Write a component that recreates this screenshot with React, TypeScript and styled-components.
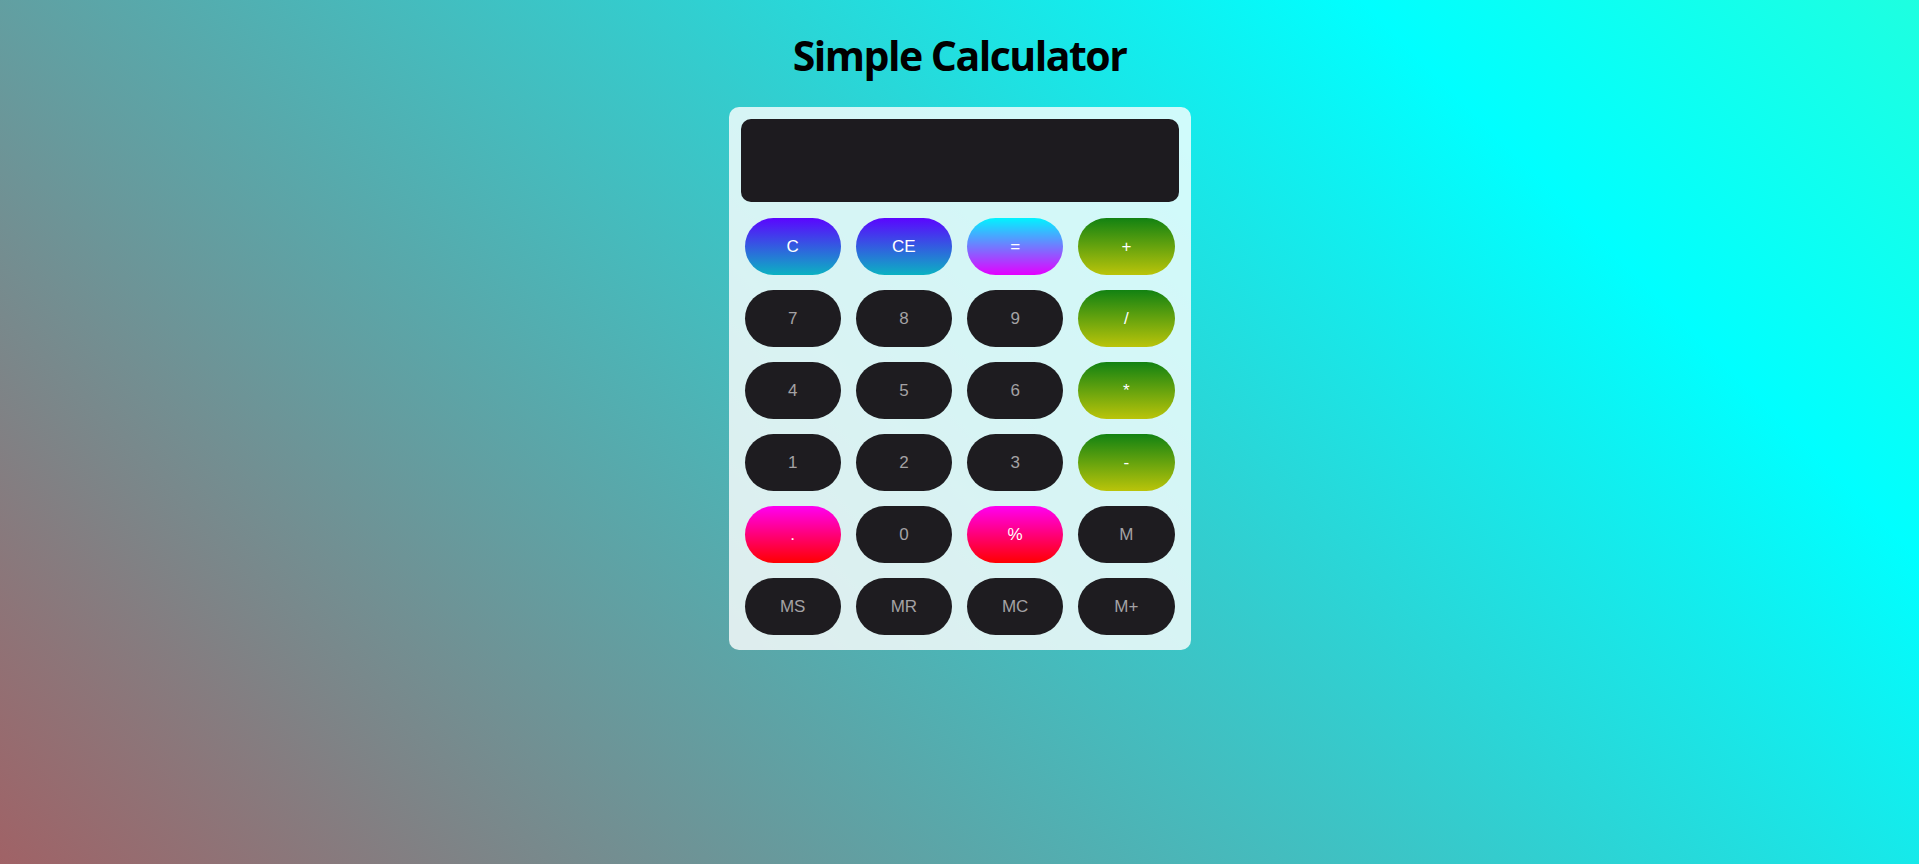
import styled, { createGlobalStyle } from 'styled-components'

type Variant = 'digit' | 'clear' | 'equals' | 'operator' | 'accent'

interface Key {
  label: string
  variant: Variant
}

const keys: Key[] = [
  { label: 'C', variant: 'clear' },
  { label: 'CE', variant: 'clear' },
  { label: '=', variant: 'equals' },
  { label: '+', variant: 'operator' },
  { label: '7', variant: 'digit' },
  { label: '8', variant: 'digit' },
  { label: '9', variant: 'digit' },
  { label: '/', variant: 'operator' },
  { label: '4', variant: 'digit' },
  { label: '5', variant: 'digit' },
  { label: '6', variant: 'digit' },
  { label: '*', variant: 'operator' },
  { label: '1', variant: 'digit' },
  { label: '2', variant: 'digit' },
  { label: '3', variant: 'digit' },
  { label: '-', variant: 'operator' },
  { label: '.', variant: 'accent' },
  { label: '0', variant: 'digit' },
  { label: '%', variant: 'accent' },
  { label: 'M', variant: 'digit' },
  { label: 'MS', variant: 'digit' },
  { label: 'MR', variant: 'digit' },
  { label: 'MC', variant: 'digit' },
  { label: 'M+', variant: 'digit' },
]

const backgrounds: Record<Variant, string> = {
  digit: '#1e1c20',
  clear: 'linear-gradient(#5b05ff, #0bb2c2)',
  equals: 'linear-gradient(#00f4ff, #e400ff)',
  operator: 'linear-gradient(#128212, #bac40a)',
  accent: 'linear-gradient(#ff00f2, #ff0000)',
}

const GlobalStyle = createGlobalStyle`
  * {
    box-sizing: border-box;
  }

  html,
  body {
    margin: 0;
    padding: 0;
  }

  body {
    min-height: 100vh;
    background: linear-gradient(45deg, #a06266 0%, #00ffff 80%, #1effe0 100%);
    background-attachment: fixed;
    font-family: 'Liberation Sans', Arial, sans-serif;
  }
`

export default function App() {
  return (
    <>
      <GlobalStyle />
      <Page>
        <Title>Simple Calculator</Title>
        <Calculator>
          <Display />
          <Keypad>
            {keys.map((key) => (
              <KeyButton key={key.label} $variant={key.variant}>
                {key.label}
              </KeyButton>
            ))}
          </Keypad>
        </Calculator>
      </Page>
    </>
  )
}

const Page = styled.div`
  display: flex;
  flex-direction: column;
  align-items: center;
  min-height: 100vh;
`

const Title = styled.h1`
  margin: 27px 0 24px;
  font-family: 'Open Sans', 'Noto Sans', sans-serif;
  font-size: 41px;
  font-weight: 700;
  line-height: 56px;
  letter-spacing: -1.5px;
  color: #000;
`

const Calculator = styled.div`
  display: flex;
  flex-direction: column;
  width: 462px;
  padding: 12px 12px 11px;
  border-radius: 10px;
  background-color: rgba(255, 255, 255, 0.8);
`

const Display = styled.div`
  width: 100%;
  height: 83px;
  border-radius: 10px;
  background-color: #1d1b1f;
`

const Keypad = styled.div`
  display: grid;
  grid-template-columns: repeat(4, 1fr);
  column-gap: 15px;
  row-gap: 15px;
  margin-top: 12px;
  padding: 4px;
`

const KeyButton = styled.button<{ $variant: Variant }>`
  height: 57px;
  padding: 0;
  border: none;
  border-radius: 30px;
  background: ${({ $variant }) => backgrounds[$variant]};
  color: ${({ $variant }) => ($variant === 'digit' ? '#a4a2a4' : '#ffffff')};
  font-family: 'Liberation Sans', Arial, sans-serif;
  font-size: 17px;
  cursor: pointer;
`
